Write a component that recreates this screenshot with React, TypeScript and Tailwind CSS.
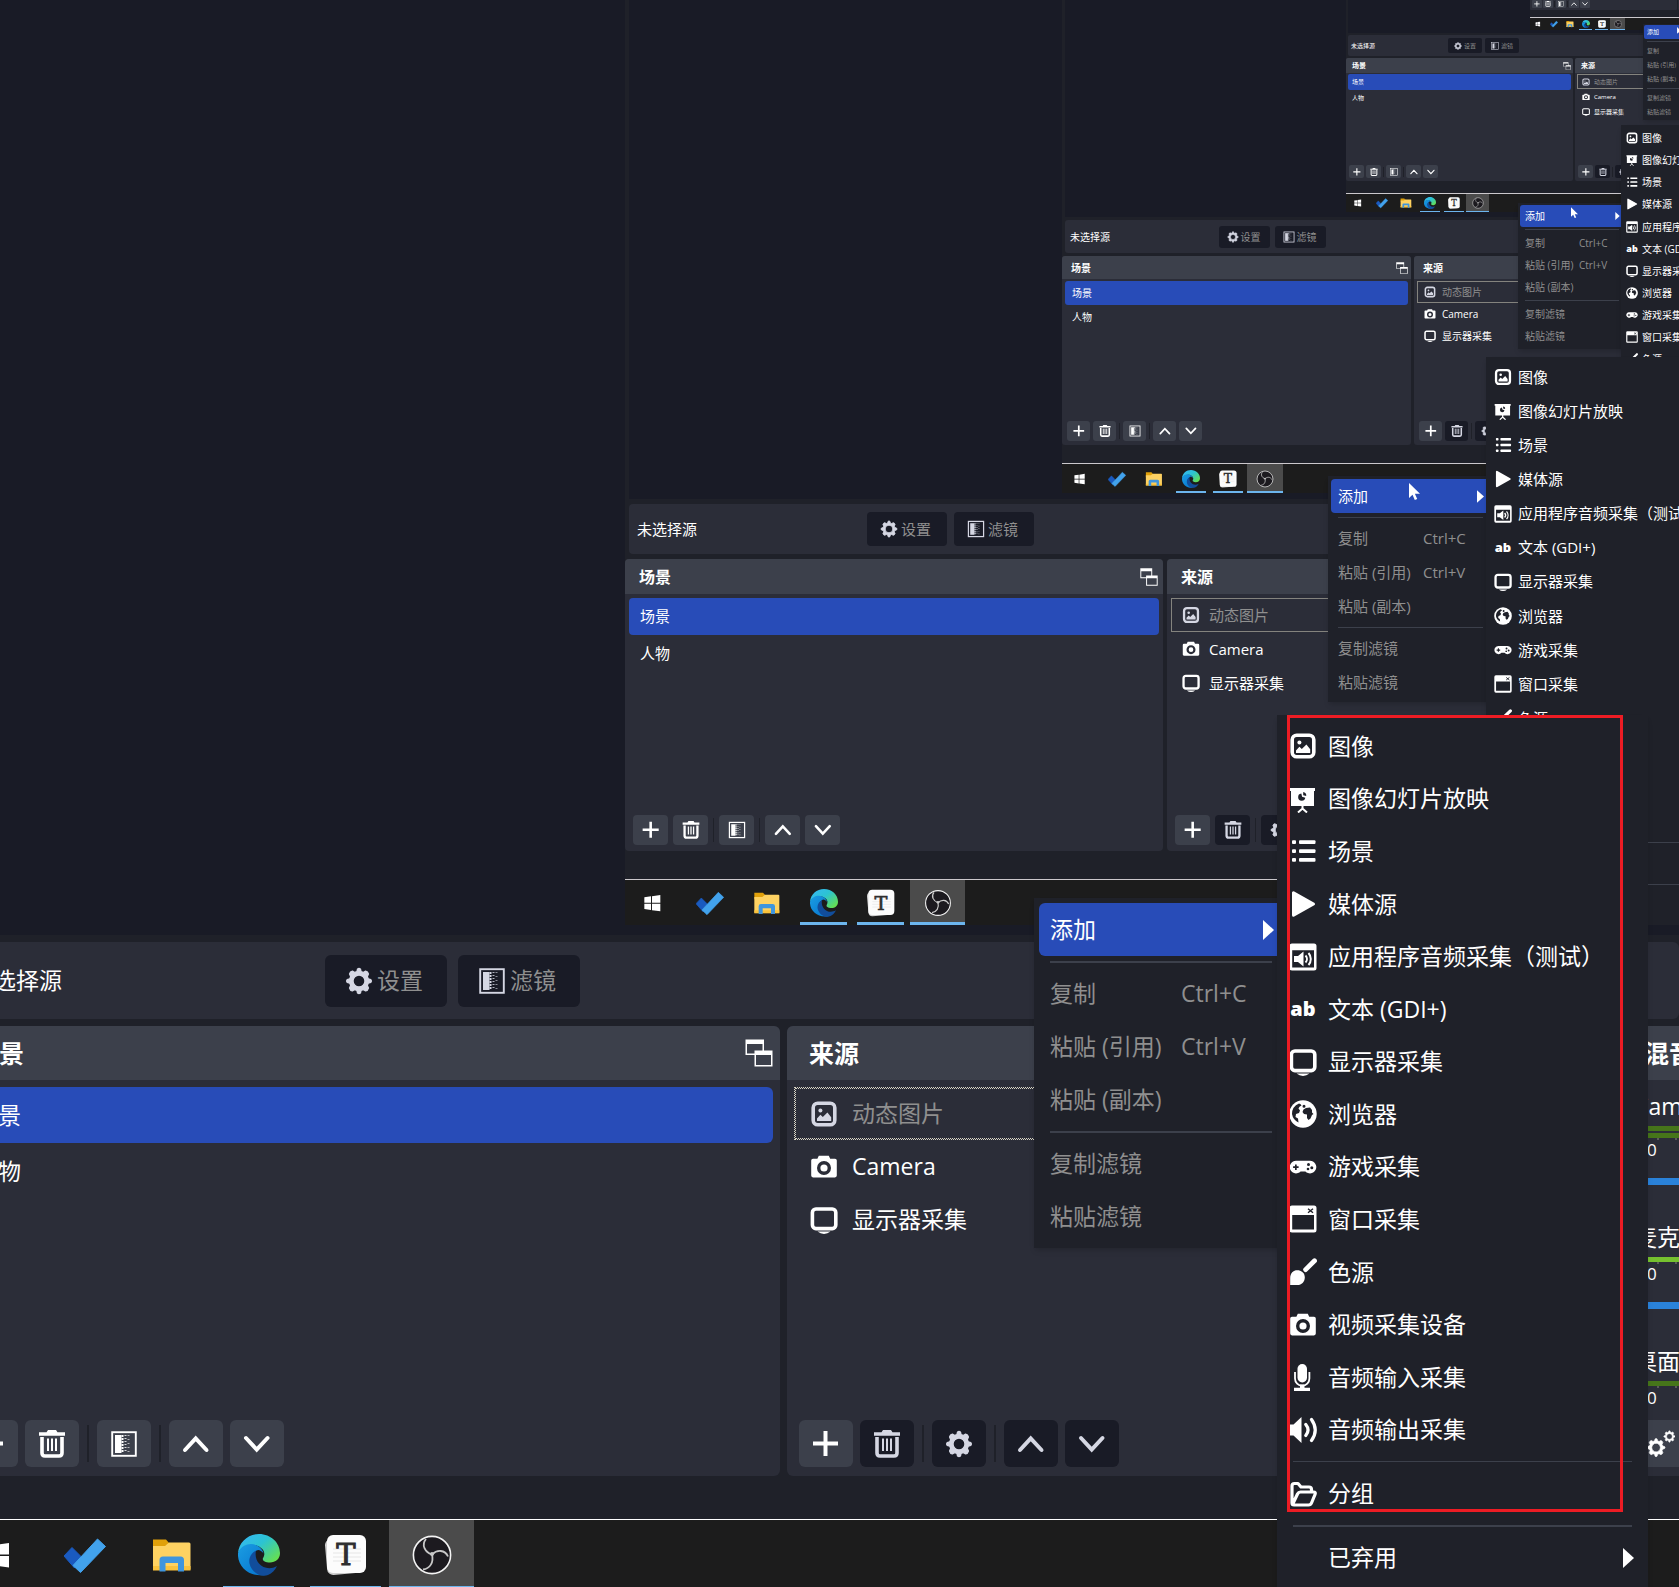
import type { ReactNode } from 'react';
import clsx from 'clsx';

interface Sizes {
  preview: string;
  gap: string;
  contextBar: string;
  contextLabel: string;
  contextButtons: string;
  contextButton: string;
  docks: string;
  dock: string;
  dockTitle: string;
  list: string;
  scene: string;
  source: string;
  toolbar: string;
  toolButton: string;
  divider: string;
  icon: string;
  text: string;
  titleText: string;
  letters: string;
  taskbar: string;
  task: string;
  taskActive: string;
  taskIcon: string;
  underline: string;
  menu: string;
  menuRow: string;
  shortcut: string;
  menuRule: string;
  rule: string;
  arrow: string;
  cursor: string;
  submenu: string;
  submenuList: string;
  submenuRow: string;
  submenuRowHeight: string;
  submenuRule: string;
}

// One entry per nesting depth of the captured display
const SIZES: Sizes[] = [
  {
    preview: 'ml-[7px] pl-[666px] pb-[10px]',
    gap: 'h-[7px]',
    contextBar: 'h-[77px] ml-[7px] rounded-[6px]',
    contextLabel: 'w-[366px] pl-[11px]',
    contextButtons: 'gap-[11px]',
    contextButton: 'w-[122px] h-[52px] gap-[4px] pr-[4px] rounded-[6px]',
    docks: 'h-[450px] gap-[7px] mb-[43px]',
    dock: 'w-[828px] rounded-[6px]',
    dockTitle: 'h-[54px] pl-[22px] pr-[7px]',
    list: 'p-[7px]',
    scene: 'h-[56px] px-[16px] rounded-[6px]',
    source: 'h-[53px] pl-[15px] gap-[14px]',
    toolbar: 'gap-[7px] px-[12px] pb-[9px]',
    toolButton: 'w-[54px] h-[47px] rounded-[6px]',
    divider: 'w-[2px] mx-px h-[37px]',
    icon: 'size-[28px]',
    text: 'text-[23px]',
    titleText: 'text-[25px]',
    letters: 'text-[20px]',
    taskbar: 'h-[71px] pl-[2px]',
    task: 'w-[87px]',
    taskActive: 'w-[85px]',
    taskIcon: 'size-[42px]',
    underline: 'w-[71px] h-[4px]',
    menu: 'left-[1082px] bottom-[342px] w-[254px] p-[5px]',
    menuRow: 'h-[53px] pl-[11px] rounded-[6px]',
    shortcut: 'w-[102px]',
    menuRule: 'h-[11px] px-[11px]',
    rule: 'h-[2px]',
    arrow: 'w-[11px] h-[20px] mr-[9px]',
    cursor: 'hidden',
    submenu: 'left-[1325px] w-[371px] pt-[5px] pb-[6px]',
    submenuList: 'h-[736px]',
    submenuRow: 'pl-[12px] pr-[5px] gap-[11px]',
    submenuRowHeight: 'h-[53px]',
    submenuRule: 'h-[11px] px-[16px]',
  },
  {
    preview: 'ml-[4px] pl-[433px] pb-[6px]',
    gap: 'h-[5px]',
    contextBar: 'h-[50px] ml-[4px] rounded-[4px]',
    contextLabel: 'w-[238px] pl-[8px]',
    contextButtons: 'gap-[7px]',
    contextButton: 'w-[80px] h-[34px] gap-[3px] pr-[3px] rounded-[4px]',
    docks: 'h-[292px] gap-[4px] mb-[28px]',
    dock: 'w-[538px] rounded-[4px]',
    dockTitle: 'h-[35px] pl-[14px] pr-[5px]',
    list: 'p-[4px]',
    scene: 'h-[37px] px-[11px] rounded-[4px]',
    source: 'h-[34px] pl-[10px] gap-[9px]',
    toolbar: 'gap-[5px] px-[8px] pb-[6px]',
    toolButton: 'w-[35px] h-[30px] rounded-[4px]',
    divider: 'w-px h-[24px]',
    icon: 'size-[18px]',
    text: 'text-[15px]',
    titleText: 'text-[16px]',
    letters: 'text-[13px]',
    taskbar: 'h-[46px]',
    task: 'w-[57px] pr-[2px]',
    taskActive: 'w-[55px]',
    taskIcon: 'size-[28px]',
    underline: 'w-[47px] h-[3px]',
    menu: 'left-[703px] bottom-[223px] w-[165px] p-[3px]',
    menuRow: 'h-[34px] pl-[7px] rounded-[4px]',
    shortcut: 'w-[67px]',
    menuRule: 'h-[8px] px-[7px]',
    rule: 'h-px',
    arrow: 'w-[7px] h-[13px] mr-[6px]',
    cursor: 'left-[81px] top-[7px] w-[11px] h-[18px]',
    submenu: 'left-[861px] w-[241px] py-[3px]',
    submenuList: 'h-[478px]',
    submenuRow: 'pl-[8px] pr-[3px] gap-[6px]',
    submenuRowHeight: 'h-[34px]',
    submenuRule: 'h-[8px] px-[10px]',
  },
  {
    preview: 'ml-[3px] pl-[281px] pb-[5px]',
    gap: 'h-[3px]',
    contextBar: 'h-[33px] ml-[3px] rounded-[3px]',
    contextLabel: 'w-[154px] pl-[5px]',
    contextButtons: 'gap-[5px]',
    contextButton: 'w-[51px] h-[22px] gap-[2px] pr-[2px] rounded-[3px]',
    docks: 'h-[189px] gap-[3px] mb-[18px]',
    dock: 'w-[349px] rounded-[3px]',
    dockTitle: 'h-[23px] pl-[9px] pr-[3px]',
    list: 'px-[3px] py-[2px]',
    scene: 'h-[24px] px-[7px] rounded-[3px]',
    source: 'h-[22px] pl-[6px] gap-[6px]',
    toolbar: 'gap-[3px] px-[5px] pb-[4px]',
    toolButton: 'w-[23px] h-[20px] rounded-[3px]',
    divider: 'w-px h-[16px]',
    icon: 'size-[12px]',
    text: 'text-[10px]',
    titleText: 'text-[10px]',
    letters: 'text-[9px]',
    taskbar: 'h-[30px]',
    task: 'w-[37px] pr-px',
    taskActive: 'w-[36px]',
    taskIcon: 'size-[18px]',
    underline: 'w-[30px] h-[2px]',
    menu: 'left-[456px] bottom-[144px] w-[108px] p-[2px]',
    menuRow: 'h-[22px] pl-[5px] rounded-[3px]',
    shortcut: 'w-[45px]',
    menuRule: 'h-[5px] px-[5px]',
    rule: 'h-px',
    arrow: 'w-[5px] h-[8px] mr-[4px]',
    cursor: 'left-[53px] top-[4px] w-[7px] h-[12px]',
    submenu: 'left-[559px] w-[156px] py-[2px]',
    submenuList: 'h-[310px]',
    submenuRow: 'pl-[5px] pr-[2px] gap-[4px]',
    submenuRowHeight: 'h-[22px]',
    submenuRule: 'h-[5px] px-[7px]',
  },
  {
    preview: 'ml-[2px] pl-[182px] pb-[3px]',
    gap: 'h-[2px]',
    contextBar: 'h-[21px] ml-[2px] rounded-[2px]',
    contextLabel: 'w-[100px] pl-[3px]',
    contextButtons: 'gap-[3px]',
    contextButton: 'w-[34px] h-[15px] gap-[2px] rounded-[2px]',
    docks: 'h-[123px] gap-[2px] mb-[12px]',
    dock: 'w-[227px] rounded-[2px]',
    dockTitle: 'h-[15px] pl-[6px] pr-[2px]',
    list: 'px-[2px] py-px',
    scene: 'h-[16px] px-[4px] rounded-[2px]',
    source: 'h-[15px] pl-[4px] gap-[4px]',
    toolbar: 'gap-[2px] px-[3px] pb-[3px]',
    toolButton: 'w-[15px] h-[13px] rounded-[2px]',
    divider: 'w-px h-[10px]',
    icon: 'size-[8px]',
    text: 'text-[6px]',
    titleText: 'text-[7px]',
    letters: 'text-[5px]',
    taskbar: 'h-[19px]',
    task: 'w-[24px] pr-px',
    taskActive: 'w-[23px]',
    taskIcon: 'size-[12px]',
    underline: 'w-[20px] h-px',
    menu: 'left-[297px] bottom-[92px] w-[70px] p-px',
    menuRow: 'h-[14px] pl-[3px] rounded-[2px]',
    shortcut: 'w-[28px]',
    menuRule: 'h-[5px] px-[3px]',
    rule: 'h-px',
    arrow: 'w-[3px] h-[5px] mr-[3px]',
    cursor: 'left-[34px] top-[3px] w-[5px] h-[8px]',
    submenu: 'left-[363px] w-[101px] py-px',
    submenuList: 'h-[201px]',
    submenuRow: 'pl-[3px] gap-[3px]',
    submenuRowHeight: 'h-[14px]',
    submenuRule: 'h-[3px] px-[4px]',
  },
  {
    preview: '',
    gap: 'h-px',
    contextBar: 'h-[14px] ml-px',
    contextLabel: 'w-[65px] pl-[2px]',
    contextButtons: 'gap-[2px]',
    contextButton: 'w-[22px] h-[10px] gap-px',
    docks: 'h-[80px] gap-px mb-[7px]',
    dock: 'w-[147px] rounded-[1px]',
    dockTitle: 'h-[10px] pl-[4px] pr-px',
    list: 'p-px',
    scene: 'h-[10px] px-[3px]',
    source: 'h-[9px] pl-[2px] gap-[2px]',
    toolbar: 'gap-px px-[2px] pb-[2px]',
    toolButton: 'w-[10px] h-[8px] rounded-[1px]',
    divider: 'w-px h-[6px]',
    icon: 'size-[6px]',
    text: 'text-[4px]',
    titleText: 'text-[4px]',
    letters: 'text-[3px]',
    taskbar: 'h-[13px]',
    task: 'w-[16px] pr-px',
    taskActive: 'w-[15px]',
    taskIcon: 'size-[8px]',
    underline: 'w-[13px] h-px',
    menu: 'hidden',
    menuRow: '',
    shortcut: '',
    menuRule: '',
    rule: '',
    arrow: '',
    cursor: 'hidden',
    submenu: 'hidden',
    submenuList: '',
    submenuRow: '',
    submenuRowHeight: '',
    submenuRule: '',
  },
];

const GEAR =
  'M12 4.6 L12.6 2 Q14 1 15.4 2 L16 4.6 L18.2 5.5 L20.6 4.2 Q22.8 4.6 23.4 7 L22.2 9.6 L23.2 11.8 L25.8 12.6 Q27 14 25.8 15.4 L23.2 16.2 L22.2 18.4 L23.4 21 Q22.8 23.4 20.6 23.8 L18.2 22.5 L16 23.4 L15.4 26 Q14 27 12.6 26 L12 23.4 L9.8 22.5 L7.4 23.8 Q5.2 23.4 4.6 21 L5.8 18.4 L4.8 16.2 L2.2 15.4 Q1 14 2.2 12.6 L4.8 11.8 L5.8 9.6 L4.6 7 Q5.2 4.6 7.4 4.2 L9.8 5.5 Z M14 8 A6 6 0 1 0 14 20 A6 6 0 1 0 14 8 Z';

const ICONS: Record<string, ReactNode> = {
  image: (
    <>
      <rect x="3.2" y="3.2" width="21.6" height="21.6" rx="4.5" fill="none" stroke="currentColor" strokeWidth="3.6" />
      <circle cx="10.4" cy="10.4" r="2" />
      <path d="M7 21v-2.600l3.400-3.600 2.400 2.200 4.600-4.400 3.800 4.600V21z" />
    </>
  ),
  slideshow: (
    <>
      <path d="M1 3h25v3h-1v15H2V6H1z" />
      <path d="M12.300 8.600a3.600 3.600 0 1 0 4 4.200l-3.200-1zM14.200 7v3.200l3 .8A3.400 3.400 0 0 0 14.200 7z" fill="#1f2129" />
      <path d="M13.500 20v4M9 27.500l4.500-4 4.500 4" fill="none" stroke="currentColor" strokeWidth="2" />
    </>
  ),
  scene: (
    <>
      <rect x="3" y="3.300" width="4" height="3.700" rx="1" />
      <rect x="3" y="12.200" width="4" height="3.700" rx="1" />
      <rect x="3" y="21.100" width="4" height="3.700" rx="1" />
      <rect x="10" y="3.300" width="16.500" height="3.700" rx="1" />
      <rect x="10" y="12.200" width="16.500" height="3.700" rx="1" />
      <rect x="10" y="21.100" width="16.500" height="3.700" rx="1" />
    </>
  ),
  media: <path d="M4.500 2.800v22.400L24.500 14z" stroke="currentColor" strokeWidth="3" strokeLinejoin="round" />,
  appAudio: (
    <>
      <path
        fillRule="evenodd"
        d="M3 .5h22a2.500 2.500 0 0 1 2.500 2.500v22a2.500 2.500 0 0 1-2.500 2.500H3A2.500 2.500 0 0 1 .5 25V3A2.500 2.500 0 0 1 3 .5zM3.200 7.200v17.300h21.800V7.200z"
      />
      <path d="M5 13h4l5.500-4.500v15L9 19H5z" />
      <path d="M16.500 12.500a5 5 0 0 1 0 7M19.500 10a9 9 0 0 1 0 12" fill="none" stroke="currentColor" strokeWidth="2" />
    </>
  ),
  display: (
    <>
      <rect x="2.400" y="3" width="23.400" height="19.600" rx="3.500" fill="none" stroke="currentColor" strokeWidth="3.600" />
      <path d="M7.500 25.600h13q-3 2.400-6.500 2.400t-6.500-2.400z" />
    </>
  ),
  browser: (
    <>
      <circle cx="14" cy="14" r="13.700" />
      <path
        d="M10 3.500q2 .5 2.500 2-2.500 1-3 3l1.500 2-1 2.500-3 1-.5 3 2.500 1.500.5 4q-5.500-2.500-6.500-8.500 0-7.500 7-10.500zM14.500 9.500l2.500-1.500 4-.5 2 2.500v2.500l1.500 1.500-1.500 1-1.500 3.500-2 1.500-1.500-2v-3.500l-3-.5-1.500-2zM13.500 6.200a1.500 1.500 0 1 0 3 0a1.500 1.500 0 1 0-3 0z"
        fill="#1f2129"
      />
    </>
  ),
  game: (
    <>
      <path d="M7 7.800h14a6.300 6.300 0 1 1-4.600 10.600h-4.800A6.300 6.300 0 1 1 7 7.800z" />
      <g fill="#1f2129">
        <path d="M6 11.400v1.900H4.100v1.700H6v1.900h1.700V15h1.900v-1.700H7.700v-1.900z" />
        <circle cx="19.500" cy="11.600" r="1.500" />
        <circle cx="22.800" cy="14.800" r="1.500" />
        <circle cx="19" cy="16" r="1.300" />
      </g>
    </>
  ),
  window: (
    <>
      <path
        fillRule="evenodd"
        d="M3 .5h22a2.500 2.500 0 0 1 2.500 2.500v22a2.500 2.500 0 0 1-2.500 2.500H3A2.500 2.500 0 0 1 .5 25V3A2.500 2.500 0 0 1 3 .5zM3.200 10v14.500H25V10z"
      />
      <path d="M19 3.800l5 4M24 3.800l-5 4" stroke="#1f2129" strokeWidth="1.400" />
    </>
  ),
  color: (
    <>
      <path d="M1.200 27V20c0-5 3-7.800 7-7.800 4.400 0 7.600 3 7.600 7.200S12.500 27 8.500 27z" />
      <path d="M16.600 11.600L25.500 2.800" fill="none" stroke="currentColor" strokeWidth="4.800" strokeLinecap="round" />
    </>
  ),
  camera: (
    <path
      fillRule="evenodd"
      d="M8.800 2.800h10l1.400 3H25a1.800 1.800 0 0 1 1.800 1.800v15A1.800 1.800 0 0 1 25 24.400H3a1.800 1.800 0 0 1-1.800-1.800v-15A1.800 1.800 0 0 1 3 5.800h4.400zM14 8a7 7 0 1 0 0 14a7 7 0 1 0 0-14zM14 11.400a3.600 3.600 0 1 1 0 7.200a3.600 3.600 0 1 1 0-7.200z"
    />
  ),
  mic: (
    <>
      <rect x="8.500" y="1" width="9.500" height="18.500" rx="4.700" />
      <path d="M6 9v6.500a7.200 7.200 0 0 0 14.400 0V9" fill="none" stroke="currentColor" strokeWidth="1.800" />
      <path d="M11 21.500h4.500v3.200h5.500V28H5v-3.300h6z" />
    </>
  ),
  speaker: (
    <>
      <path d="M0 8.500h4.500L12.500 1v26L4.500 19.500H0z" />
      <path d="M16.800 8.500q4.500 5.500 0 11M22.500 3.500q7.500 10.500 0 21" fill="none" stroke="currentColor" strokeWidth="3.200" strokeLinecap="round" />
    </>
  ),
  group: (
    <path
      d="M3 23V6q0-2.500 2.500-2.500H9L12 7h8q2.500 0 2.500 2.500V12M3.500 24.500L8.500 14q1-2 3-2h13q2.500 0 1.500 2.500l-3.500 8.500q-.8 2-3 2H5q-2 0-2-2"
      fill="none"
      stroke="currentColor"
      strokeWidth="3.200"
      strokeLinejoin="round"
    />
  ),
  plus: <path d="M13.500 1v25M1 13.500h25" fill="none" stroke="currentColor" strokeWidth="4" />,
  trash: (
    <>
      <path d="M1 2.200h7.500L10 0h8l1.500 2.200H27v3.600H1z" />
      <path d="M4 7v16q0 3 3 3h14q3 0 3-3V7" fill="none" stroke="currentColor" strokeWidth="3.600" />
      <path d="M10 8.500v12.500M14 8.500v12.500M18 8.500v12.500" fill="none" stroke="currentColor" strokeWidth="2" />
    </>
  ),
  gear: <path fillRule="evenodd" d={GEAR} stroke="currentColor" strokeWidth="1.400" strokeLinejoin="round" />,
  gears: (
    <>
      <path fillRule="evenodd" d={GEAR} stroke="currentColor" transform="translate(-1 7.500) scale(.72)" />
      <path fillRule="evenodd" d={GEAR} stroke="currentColor" transform="translate(16 0) scale(.46)" />
    </>
  ),
  up: (
    <path d="M3 20L13.700 8.500 24.500 20" fill="none" stroke="currentColor" strokeWidth="4" strokeLinecap="round" />
  ),
  down: (
    <path d="M3 8L13.700 19.500 24.500 8" fill="none" stroke="currentColor" strokeWidth="4" strokeLinecap="round" />
  ),
  filter: (
    <>
      <rect x="2.200" y="2.200" width="23.600" height="23.600" fill="none" stroke="currentColor" strokeWidth="1.900" />
      <path d="M5 5h6.500v18H5z" />
      <path d="M12.500 5v18" fill="none" stroke="currentColor" strokeWidth="2" strokeDasharray="2 1" />
      <path d="M15.500 5v18" fill="none" stroke="currentColor" strokeWidth="2" strokeDasharray="1 2" opacity=".8" />
      <path d="M18.500 5v18" fill="none" stroke="currentColor" strokeWidth="2" strokeDasharray="1 3" opacity=".6" />
    </>
  ),
  popout: (
    <path fillRule="evenodd" d="M.5.500h18.500v11h8.500v16H9.500V16H.500zM2 5v9.500h7.500v-3h8V5zM11 16v10h15V16z" />
  ),
};

const SCENES = ['场景', '人物'];

const SOURCES = [
  { icon: 'image', label: '动态图片', hidden: true },
  { icon: 'camera', label: 'Camera', hidden: false },
  { icon: 'display', label: '显示器采集', hidden: false },
];

const SOURCE_TYPES = [
  { icon: 'image', label: '图像' },
  { icon: 'slideshow', label: '图像幻灯片放映' },
  { icon: 'scene', label: '场景' },
  { icon: 'media', label: '媒体源' },
  { icon: 'appAudio', label: '应用程序音频采集（测试）' },
  { icon: 'text', label: '文本 (GDI+)' },
  { icon: 'display', label: '显示器采集' },
  { icon: 'browser', label: '浏览器' },
  { icon: 'game', label: '游戏采集' },
  { icon: 'window', label: '窗口采集' },
  { icon: 'color', label: '色源' },
  { icon: 'camera', label: '视频采集设备' },
  { icon: 'mic', label: '音频输入采集' },
  { icon: 'speaker', label: '音频输出采集' },
];

const CHANNELS = [
  { name: 'Camera', bars: 2, color: 'bg-[#46751a]' },
  { name: '麦克风/Aux', bars: 1, color: 'bg-[#76c12f]' },
  { name: '桌面音频', bars: 1, color: 'bg-[#46751a]' },
];

function Icon({ name, s, className }: { name: string; s: Sizes; className?: string }) {
  if (name === 'text') {
    return (
      <span className={clsx('flex shrink-0 items-center justify-center font-extrabold', s.icon, s.letters)}>ab</span>
    );
  }
  return (
    <svg viewBox="0 0 28 28" fill="currentColor" aria-hidden="true" className={clsx('shrink-0', s.icon, className)}>
      {ICONS[name]}
    </svg>
  );
}

function Arrow({ s }: { s: Sizes }) {
  return (
    <svg viewBox="0 0 11 20" fill="currentColor" aria-hidden="true" className={clsx('ml-auto shrink-0', s.arrow)}>
      <path d="M0 0l11 10L0 20z" />
    </svg>
  );
}

function Rule({ s, className, thin }: { s: Sizes; className: string; thin?: boolean }) {
  return (
    <div role="separator" className={clsx('flex items-center', className)}>
      <div className={clsx('w-full bg-[#3c404b]', thin ? 'h-px' : s.rule)} />
    </div>
  );
}

function ToolButton({ icon, label, s, disabled }: { icon: string; label: string; s: Sizes; disabled?: boolean }) {
  return (
    <button
      type="button"
      aria-label={label}
      disabled={disabled}
      className={clsx(
        'flex shrink-0 items-center justify-center',
        s.toolButton,
        disabled ? 'bg-[#191b26] text-[#d5d7e3]' : 'bg-[#3c404b] text-white'
      )}
    >
      <Icon name={icon} s={s} />
    </button>
  );
}

function Dock({ title, s, children, toolbar, popout, last }: {
  title: string; s: Sizes; children: ReactNode; toolbar: ReactNode; popout?: boolean; last?: boolean;
}) {
  return (
    <section className={clsx('flex shrink-0 flex-col overflow-hidden bg-[#2b2d38]', s.dock, last && 'grow')}>
      <header className={clsx('flex shrink-0 items-center justify-between bg-[#3c404b]', s.dockTitle)}>
        <h2 className={clsx('font-bold', s.titleText)}>{title}</h2>
        {popout && <Icon name="popout" s={s} />}
      </header>
      <div className="min-h-0 flex-1 overflow-hidden">{children}</div>
      <div className={clsx('flex shrink-0 items-center', s.toolbar)}>{toolbar}</div>
    </section>
  );
}

function ScenesDock({ s }: { s: Sizes }) {
  return (
    <Dock
      title="场景"
      s={s}
      popout
      toolbar={
        <>
          <ToolButton icon="plus" label="添加场景" s={s} />
          <ToolButton icon="trash" label="移除场景" s={s} />
          <div className={clsx('bg-[#1f2129]', s.divider)} />
          <ToolButton icon="filter" label="场景滤镜" s={s} />
          <div className={clsx('bg-[#1f2129]', s.divider)} />
          <ToolButton icon="up" label="上移场景" s={s} />
          <ToolButton icon="down" label="下移场景" s={s} />
        </>
      }
    >
      <ul className={s.list}>
        {SCENES.map((scene, i) => (
          <li key={scene} className={clsx('flex items-center', s.scene, s.text, i === 0 && 'bg-[#284cb8]')}>
            {scene}
          </li>
        ))}
      </ul>
    </Dock>
  );
}

function SourcesDock({ s, depth }: { s: Sizes; depth: number }) {
  // the outer screen gets a two pixel focus frame, the nested ones a faint single line
  const frame = depth === 0
    ? 'border-dotted border-[#d6d3c4] outline-1 outline-dotted outline-[#d6d3c4] -outline-offset-2'
    : 'border-[#84837e]';
  return (
    <Dock
      title="来源"
      s={s}
      toolbar={
        <>
          <ToolButton icon="plus" label="添加来源" s={s} />
          <ToolButton icon="trash" label="移除来源" s={s} disabled />
          <div className={clsx('bg-[#1f2129]', s.divider)} />
          <ToolButton icon="gear" label="来源属性" s={s} disabled />
          <div className={clsx('bg-[#1f2129]', s.divider)} />
          <ToolButton icon="up" label="上移来源" s={s} disabled />
          <ToolButton icon="down" label="下移来源" s={s} disabled />
        </>
      }
    >
      <ul className={s.list}>
        {SOURCES.map(source => (
          <li
            key={source.label}
            className={clsx('flex items-center border', s.source, s.text, source.hidden ? frame : 'border-transparent')}
          >
            <Icon name={source.icon} s={s} className={source.hidden ? 'text-[#d5d7e3]' : undefined} />
            <span className={source.hidden ? 'text-[#8f8f8f]' : undefined}>{source.label}</span>
          </li>
        ))}
      </ul>
    </Dock>
  );
}

function MixerDock({ s }: { s: Sizes }) {
  return (
    <Dock title="混音器" s={s} last toolbar={<ToolButton icon="gears" label="高级音频属性" s={s} />}>
      <div className="px-[12px] pt-[13px]">
        {CHANNELS.map(channel => (
          <div key={channel.name} className="pb-[39px]">
            <div className={clsx('h-[28px] leading-[26px]', s.text)}>{channel.name}</div>
            <div className="mt-[5px] flex flex-col gap-[2px]">
              {Array.from({ length: channel.bars }, (_, i) => (
                <div key={i} className={clsx('h-[5px]', channel.color)} />
              ))}
            </div>
            <div className="flex h-[24px] gap-[16px] pl-[23px]">
              <div className="h-[2px] w-[2px] bg-[#5b5b5b]" />
              <div className="h-[2px] w-[2px] bg-[#5b5b5b]" />
            </div>
            <div className="-mt-[24px] h-[24px] pl-[13px] text-[17px] leading-[24px]">0</div>
            <input
              type="range"
              aria-label={channel.name}
              defaultValue={100}
              className="mt-[16px] block h-[7px] w-full appearance-none bg-[#2a82da] [&::-webkit-slider-thumb]:opacity-0"
            />
          </div>
        ))}
      </div>
    </Dock>
  );
}

function ContextMenu({ s }: { s: Sizes }) {
  const row = clsx('flex w-full items-center text-left text-[#8f8f8f]', s.menuRow, s.text);
  return (
    <div role="menu" className={clsx('absolute bg-[#1f2129] shadow-md', s.menu)}>
      <button type="button" role="menuitem" className={clsx('flex w-full items-center bg-[#284cb8]', s.menuRow, s.text)}>
        添加
        <Arrow s={s} />
      </button>
      <Rule s={s} className={s.menuRule} />
      <button type="button" role="menuitem" className={row}>
        <span className="flex-1">复制</span>
        <span className={s.shortcut}>Ctrl+C</span>
      </button>
      <button type="button" role="menuitem" className={row}>
        <span className="flex-1">粘贴 (引用)</span>
        <span className={s.shortcut}>Ctrl+V</span>
      </button>
      <button type="button" role="menuitem" className={row}>粘贴 (副本)</button>
      <Rule s={s} className={s.menuRule} />
      <button type="button" role="menuitem" className={row}>复制滤镜</button>
      <button type="button" role="menuitem" className={row}>粘贴滤镜</button>
      <svg viewBox="0 0 11 18" aria-hidden="true" className={clsx('absolute', s.cursor)}>
        <path d="M0 0v15l3.500-3.300L5.800 17l2.400-1-2.300-5.200H11z" fill="#fff" />
      </svg>
    </div>
  );
}

function SourceMenu({ s }: { s: Sizes }) {
  const row = clsx('flex w-full items-center text-left', s.submenuRow, s.text);
  return (
    <div role="menu" className={clsx('absolute bottom-0 bg-[#1f2129] shadow-md', s.submenu)}>
      <div className={clsx('flex flex-col', s.submenuList)}>
        {SOURCE_TYPES.map(type => (
          <button key={type.label} type="button" role="menuitem" className={clsx('min-h-0 flex-1', row)}>
            <Icon name={type.icon} s={s} />
            {type.label}
          </button>
        ))}
      </div>
      <Rule s={s} className={s.submenuRule} thin />
      <button type="button" role="menuitem" className={clsx(row, s.submenuRowHeight)}>
        <Icon name="group" s={s} />
        分组
      </button>
      <Rule s={s} className={s.submenuRule} />
      <button type="button" role="menuitem" className={clsx(row, s.submenuRowHeight)}>
        <span className={s.icon} />
        已弃用
        <Arrow s={s} />
      </button>
    </div>
  );
}

function TaskButton({ label, s, open, active, children }: {
  label: string; s: Sizes; open?: boolean; active?: boolean; children: ReactNode;
}) {
  return (
    <button
      type="button"
      aria-label={label}
      className={clsx('flex h-full shrink-0 flex-col items-center', active ? s.taskActive : s.task, active && 'bg-[#4b4b4b]')}
    >
      <span className={s.underline} />
      <span className="flex min-h-0 flex-1 items-center">
        <svg viewBox="0 0 42 42" aria-hidden="true" className={s.taskIcon}>{children}</svg>
      </span>
      <span className={clsx(s.underline, (open || active) && 'bg-[#6cb5ee]', active && 'min-w-full')} />
    </button>
  );
}

function Taskbar({ s, depth }: { s: Sizes; depth: number }) {
  return (
    <nav
      className={clsx('flex shrink-0 border-t bg-[#1c1c1c]', s.taskbar, depth === 0 ? 'border-white' : 'border-[#cbc8cc]')}
    >
      <TaskButton label="开始" s={s}>
        <path d="M8 12.500l10-1.500v9.500H8zM19.500 10.800L32 9v11.500H19.500zM8 22h10v9.500L8 30zM19.500 22H32v11.500l-12.500-1.800z" fill="#fff" />
      </TaskButton>
      <TaskButton label="To Do" s={s}>
        <path d="M0 22l8-8.500 9 9L10.500 34z" fill="#1a5abf" stroke="#1a5abf" strokeLinejoin="round" />
        <path d="M9 31.500L33.500 5l8 7.500-25 26z" fill="#42a2ec" stroke="#42a2ec" strokeLinejoin="round" />
      </TaskButton>
      <TaskButton label="文件资源管理器" s={s}>
        <path d="M2 5.500h13l3.500 4v6H2z" fill="#e0a00a" />
        <path d="M2 12h12l4-3.500h20a1.500 1.500 0 0 1 1.500 1.500v25.500H2z" fill="#fed262" />
        <path d="M2 32h37.500v4.500H2z" fill="#f9c23c" />
        <path d="M8.500 37.500V26q0-3.500 3.500-3.500h17.500q3.500 0 3.500 3.500v11.500h-6V29H14.500v8.500z" fill="#3f95dd" />
      </TaskButton>
      <TaskButton label="Microsoft Edge" s={s} open>
        <defs>
          <linearGradient id={`edge-top-${depth}`} x1="0" y1="0" x2="1" y2=".8">
            <stop offset=".1" stopColor="#35b8f1" />
            <stop offset=".5" stopColor="#2cc3d2" />
            <stop offset="1" stopColor="#66e04f" />
          </linearGradient>
          <linearGradient id={`edge-side-${depth}`} x1="0" y1="0" x2="1" y2="1">
            <stop offset="0" stopColor="#1b9de2" />
            <stop offset="1" stopColor="#0471cd" />
          </linearGradient>
        </defs>
        <path
          d="M0 19C1 8 10 0 21 0c12 0 21 9 21 19 0 6-4.500 9.500-10 9.500-5 0-8-2-7-4.500 2-3 2-7-2-10-6-5-17-4-23 5z"
          fill={`url(#edge-top-${depth})`}
        />
        <path
          d="M0 19C4 10 13 8.500 19 11.500c4 2 6 5 6.500 8-2-3-5-4.500-7-3-3 2-5.500 5-5.500 9 0 9 7 15 16 15-16 4-30-7-29-21.500z"
          fill={`url(#edge-side-${depth})`}
        />
        <path d="M18 16.500c-5 3-7.500 7.500-6.500 13 2 9 11.500 14 18.500 11.500 4-1.500 7-5 9-9-7 4-14 2-18-2.500-3-3.500-4-8-3-13z" fill="#114d9b" />
      </TaskButton>
      <TaskButton label="Typora" s={s} open>
        <rect x="1" y="4" width="34" height="36" rx="6" fill="#cfcfcf" transform="rotate(-5 18 22)" />
        <rect x="2" y="1" width="39" height="38" rx="6" fill="#fcfcfc" />
        <path d="M8 15h28M8 19h28M8 23h28M8 27h28" stroke="#e6e6e6" />
        <text x="21" y="31" textAnchor="middle" fontFamily="DejaVu Serif, serif" fontSize="29" fill="#2e2e2e" stroke="#2e2e2e">T</text>
      </TaskButton>
      <TaskButton label="OBS Studio" s={s} active>
        <circle cx="21" cy="21" r="18.600" fill="#1c1a1f" stroke="#f4f4f4" strokeWidth="1.600" />
        <g fill="none" stroke="#c8c8c8" strokeWidth="1.800">
          <path d="M21 20.500C14 18 10 11 15 5M21 20.500c5-5 13-5 16 2M21 20.500c2 8-2 14-9 15" />
        </g>
        <circle cx="21" cy="20" r="2" fill="#c8c8c8" />
      </TaskButton>
    </nav>
  );
}

function Screen({ depth }: { depth: number }) {
  const s = SIZES[depth];
  return (
    <div className="relative flex h-full flex-col justify-end overflow-hidden bg-[#1f2129]">
      <div className={clsx('min-h-0 flex-1 bg-[#191b26]', s.preview)}>
        {depth < SIZES.length - 1 && <Screen depth={depth + 1} />}
      </div>
      <div className={clsx('shrink-0', s.gap)} />
      <div className={clsx('flex shrink-0 items-center bg-[#2b2d38]', s.contextBar)}>
        <span className={clsx('shrink-0', s.contextLabel, s.text)}>未选择源</span>
        <div className={clsx('flex', s.contextButtons)}>
          {[{ icon: 'gear', label: '设置' }, { icon: 'filter', label: '滤镜' }].map(item => (
            <button
              key={item.label}
              type="button"
              disabled
              className={clsx('flex items-center justify-center bg-[#191b26] text-[#8f8f8f]', s.contextButton, s.text)}
            >
              <Icon name={item.icon} s={s} className="text-[#d5d7e3]" />
              {item.label}
            </button>
          ))}
        </div>
      </div>
      <div className={clsx('shrink-0', s.gap)} />
      <div className={clsx('flex shrink-0', s.docks)}>
        <ScenesDock s={s} />
        <SourcesDock s={s} depth={depth} />
        {depth === 0 && <MixerDock s={s} />}
      </div>
      <Taskbar s={s} depth={depth} />
      <ContextMenu s={s} />
      <SourceMenu s={s} />
    </div>
  );
}

export default function App() {
  return (
    <main className="relative h-screen overflow-hidden bg-[#191b26] font-['Open_Sans','Noto_Sans_CJK_SC',sans-serif] leading-none whitespace-nowrap text-white">
      <div className="-ml-[48px] h-[calc(100vh+3px)]">
        <Screen depth={0} />
      </div>
      {/* highlight around the list of source types */}
      <div className="pointer-events-none absolute bottom-[75px] left-[1287px] h-[797px] w-[336px] border-3 border-[#ed1c24]" />
    </main>
  );
}
